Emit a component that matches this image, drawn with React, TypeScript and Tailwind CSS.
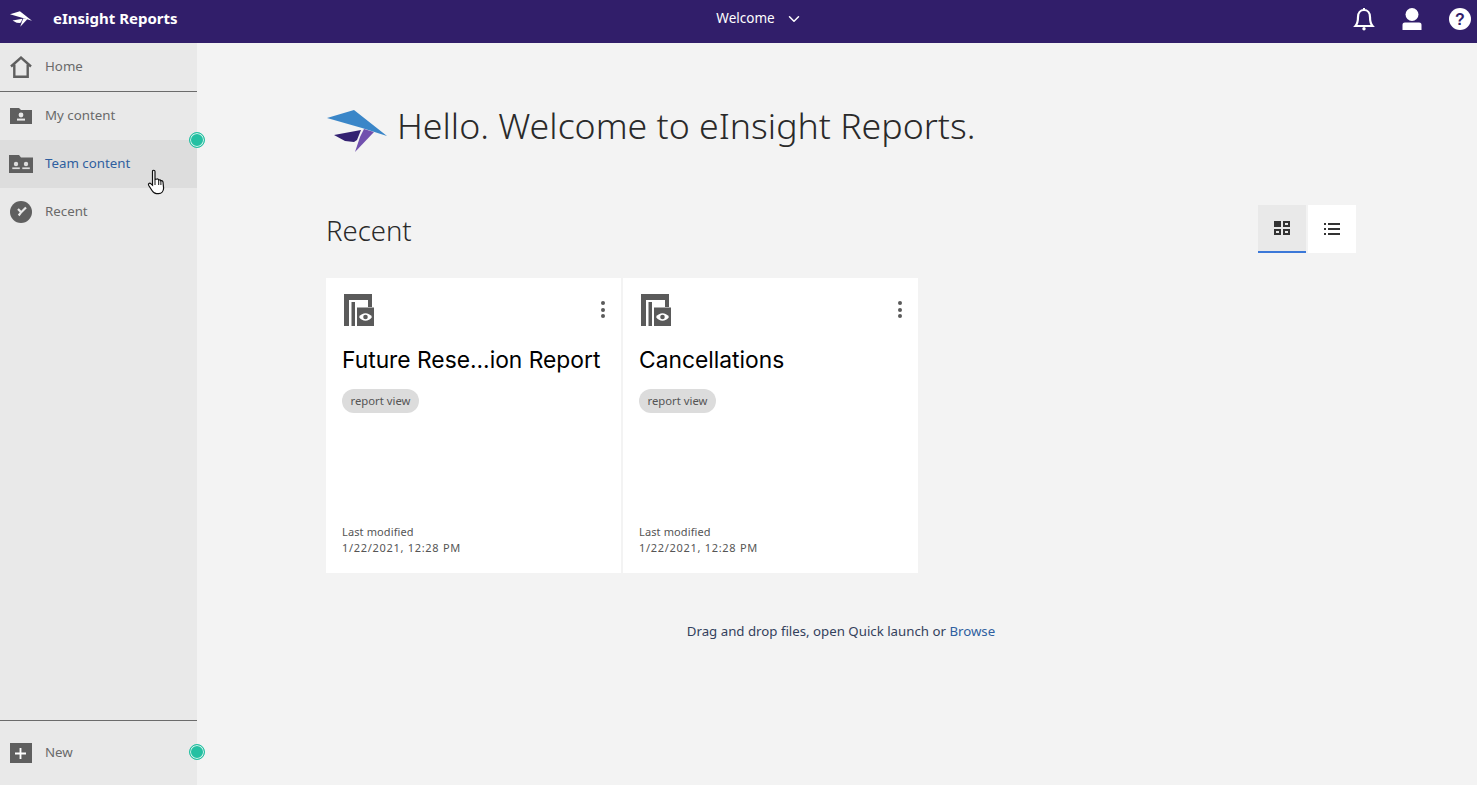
import { ChevronDown } from "lucide-react";

const font = { fontFamily: '"Noto Sans", "Liberation Sans", sans-serif' };

function Bird() {
  return (
    <svg viewBox="0 0 60 42" className="ml-[1px] mt-[10px] h-[42px] w-[60px] shrink-0">
      <path d="M0 8 L27 0 L60 26 L35 18 Z" fill="#3a86c8" />
      <path d="M7 25 L34 20 L30 30 L27 32 L18 31 Z" fill="#332171" />
      <path d="M37 19 L47 22 L28 42 L33 27 Z" fill="#7150ae" />
    </svg>
  );
}

function BirdWhite() {
  return (
    <svg viewBox="0 0 60 42" className="h-[16px] w-[22px]" fill="#fff">
      <path d="M0 8 L27 0 L60 26 L35 18 Z" />
      <path d="M7 25 L34 20 L30 30 L27 32 L18 31 Z" />
      <path d="M37 19 L47 22 L28 42 L33 27 Z" />
    </svg>
  );
}

function HomeIcon() {
  return (
    <svg viewBox="0 0 22 22" className="h-[22px] w-[22px]" fill="none" stroke="#5f5f5f" strokeWidth="2.4">
      <path d="M1 10.5 L11 1.6 L21 10.5" />
      <path d="M4.3 8.5 V20.8 H17.7 V8.5" />
    </svg>
  );
}

function MyContentIcon() {
  return (
    <svg viewBox="0 0 22 16" className="h-4 w-[22px]">
      <path d="M0 0 H9 L11 2 H22 V16 H0 Z" fill="#5f5f5f" />
      <circle cx="11" cy="7" r="2.4" fill="#e8e8e8" />
      <rect x="7" y="10.6" width="8" height="2" fill="#e8e8e8" />
    </svg>
  );
}

function TeamContentIcon() {
  return (
    <svg viewBox="0 0 24 18" className="h-[18px] w-6">
      <path d="M0 0 H10 L12 2.5 H24 V18 H0 Z" fill="#5f5f5f" />
      <circle cx="7" cy="9" r="2.2" fill="#dddddd" />
      <rect x="3.3" y="12.4" width="7.5" height="1.7" fill="#dddddd" />
      <circle cx="17" cy="9" r="2.2" fill="#dddddd" />
      <rect x="13.3" y="12.4" width="7.5" height="1.7" fill="#dddddd" />
    </svg>
  );
}

function RecentIcon() {
  return (
    <svg viewBox="0 0 22 22" className="h-[22px] w-[22px]">
      <circle cx="11" cy="11" r="11" fill="#5f5f5f" />
      <path d="M8 8 L11.2 11.2 L16 6.5 M11.2 11.2 L8.7 14.5" stroke="#e8e8e8" strokeWidth="2.2" fill="none" />
    </svg>
  );
}

function Cursor() {
  return (
    <svg viewBox="0 0 20 26" className="h-[26px] w-5">
      <path
        d="M5.5 2.5 C5.5 0.8 8 0.8 8 2.5 V10.5 L10 10 C11 9.8 11.6 10.4 11.7 11 C12.6 10.5 13.6 10.9 13.8 11.8 C14.8 11.4 15.8 12 16 13 L16.6 19 C16.6 22 14.8 24.6 11.5 24.6 H9.5 C7.3 24.6 6.2 23.4 5 21.5 L1.6 16.2 C1 15 2.4 13.6 3.7 14.6 L5.5 16.2 Z"
        fill="#fff"
        stroke="#111"
        strokeWidth="1.2"
      />
      <path d="M8 11 V16 M11.7 11.2 V16 M13.9 12 V16" stroke="#111" strokeWidth="1" fill="none" />
    </svg>
  );
}

function ReportIcon() {
  return (
    <svg viewBox="0 0 30 32" className="ml-[2px] h-8 w-[30px]">
      <path fillRule="evenodd" fill="#5a5a5a" d="M0 0 H28 V13 H24 V8 H7.5 V32 H0 Z M5 6 V32 H7.5 V8 H24 V6 Z" />
      <rect x="7.5" y="8" width="3.5" height="24" fill="#5a5a5a" />
      <rect x="13" y="13.5" width="17" height="18.5" fill="#5a5a5a" />
      <path d="M15 23 C18.5 18 24.5 18 28 23 C24.5 28 18.5 28 15 23 Z" fill="#fff" />
      <circle cx="21.5" cy="23" r="2.3" fill="#5a5a5a" />
    </svg>
  );
}

function Dot({ top }: { top: number }) {
  return (
    <span
      className="absolute left-[189px] h-4 w-4 rounded-full border-[1.5px] border-[#24c0a2] bg-[#24c0a2] shadow-[inset_0_0_0_1px_#d6f3ec]"
      style={{ top }}
    />
  );
}

function NavItem({ icon, label, active, className = "" }: { icon: React.ReactNode; label: string; active?: boolean; className?: string }) {
  return (
    <div className={`flex h-12 items-center ${active ? "bg-[#dddddd]" : ""} ${className}`}>
      <div className="flex w-[45px] shrink-0 justify-center pr-[4px]">{icon}</div>
      <span className={`text-[13.3px] ${active ? "text-[#2f5f9f]" : "text-[#6a6a6a]"}`}>{label}</span>
    </div>
  );
}

function ReportCard({ title }: { title: string }) {
  return (
    <div className="flex h-[295px] w-[295px] flex-col bg-white px-4 pt-4 pb-[17px]">
      <div className="flex items-start justify-between">
        <ReportIcon />
        <div className="mt-[7px] flex flex-col gap-[2.5px]">
          <span className="h-1 w-1 rounded-full bg-[#5a5a5a]" />
          <span className="h-1 w-1 rounded-full bg-[#5a5a5a]" />
          <span className="h-1 w-1 rounded-full bg-[#5a5a5a]" />
        </div>
      </div>
      <div className="mt-5 whitespace-nowrap text-[22.8px] leading-7 text-black" style={{ fontFamily: "Inter, sans-serif" }}>
        {title}
      </div>
      <span className="mt-[15px] flex h-6 w-[77px] items-center justify-center rounded-full bg-[#dcdcdc] text-[11.3px] text-[#555555]">report view</span>
      <div className="mt-auto text-[11px] leading-4 text-[#555555]">
        <div className="tracking-[0.12px]">Last modified</div>
        <div className="tracking-[0.7px]">1/22/2021, 12:28 PM</div>
      </div>
    </div>
  );
}

export default function App() {
  return (
    <div className="relative flex h-[785px] w-[1477px] flex-col overflow-hidden bg-[#f3f3f3]" style={font}>
      <header className="grid h-[43px] shrink-0 grid-cols-[1fr_auto_1fr] items-center bg-[#311e6a] pb-[6px] text-white">
        <div className="flex items-center pl-[10px]">
          <BirdWhite />
          <span className="ml-[21px] text-[15px] font-bold">eInsight Reports</span>
        </div>
        <div className="ml-[42px] flex items-center gap-[10px] text-[13.5px]">
          Welcome <ChevronDown size={18} />
        </div>
        <div className="flex items-center justify-end gap-[26px] pr-[6px]">
          <svg viewBox="0 0 22 24" className="h-6 w-[22px]" fill="none" stroke="#fff" strokeWidth="2.2">
            <path d="M2.5 19 C5 16 5 13 5 10 C5 6 7.5 3 11 3 C14.5 3 17 6 17 10 C17 13 17 16 19.5 19 Z" />
            <circle cx="11" cy="21.8" r="1.7" fill="#fff" stroke="none" />
            <rect x="10" y="1" width="2" height="2" fill="#fff" stroke="none" />
          </svg>
          <svg viewBox="0 0 22 24" className="h-6 w-[22px]" fill="#fff">
            <circle cx="11" cy="7.5" r="6.5" />
            <path d="M4 15.5 H18 C20 15.5 20.5 16.5 20.5 18 V23 H1.5 V18 C1.5 16.5 2 15.5 4 15.5 Z" />
          </svg>
          <svg viewBox="0 0 22 22" className="h-[22px] w-[22px]">
            <circle cx="11" cy="11" r="11" fill="#fff" />
            <text x="11" y="16.5" textAnchor="middle" fontSize="16" fontWeight="700" fill="#311e6a" fontFamily="Liberation Sans">?</text>
          </svg>
        </div>
      </header>

      <div className="flex min-h-0 flex-1">
        <aside className="flex w-[197px] shrink-0 flex-col bg-[#e9e9e9]">
          <NavItem icon={<HomeIcon />} label="Home" className="box-content border-b border-[#6b6b6b]" />
          <NavItem icon={<MyContentIcon />} label="My content" />
          <NavItem icon={<TeamContentIcon />} label="Team content" active />
          <NavItem icon={<RecentIcon />} label="Recent" />
          <div className="mt-auto flex h-[65px] items-center border-t border-[#6b6b6b]">
            <div className="flex w-[45px] shrink-0 justify-center pr-[4px]">
              <div className="flex h-5 w-[22px] items-center justify-center bg-[#5f5f5f]">
                <svg viewBox="0 0 12 12" className="h-[11px] w-[11px]" stroke="#fff" strokeWidth="2">
                  <path d="M6 0 V12 M0 6 H12" />
                </svg>
              </div>
            </div>
            <span className="text-[13.3px] text-[#6a6a6a]">New</span>
          </div>
        </aside>

        <main className="flex-1 pl-[129px] pr-[121px]">
          <div className="mt-[57px] flex items-center">
            <Bird />
            <h1 className="-mt-[2px] ml-[10px] text-[35.7px] leading-[48px] font-light text-[#2a2a2a]">Hello. Welcome to eInsight Reports.</h1>
          </div>
          <div className="mt-[53px] flex items-center justify-between">
            <h2 className="mt-1 text-[27.5px] font-light text-[#2a2a2a]">Recent</h2>
            <div className="flex gap-[2px]">
              <div className="flex h-12 w-12 items-center justify-center border-b-2 border-[#3b78d8] bg-[#e9e9e9]">
                <svg viewBox="0 0 16 14" className="h-[14px] w-4" fill="#333">
                  <rect width="7" height="6" />
                  <path fillRule="evenodd" d="M9 0 H16 V6 H9 Z M11 2 V4 H14 V2 Z" />
                  <path fillRule="evenodd" d="M0 8 H7 V14 H0 Z M2 10 V12 H5 V10 Z" />
                  <path fillRule="evenodd" d="M9 8 H16 V14 H9 Z M11 10 V12 H14 V10 Z" />
                </svg>
              </div>
              <div className="flex h-12 w-12 items-center justify-center bg-white">
                <svg viewBox="0 0 16 12" className="h-3 w-4" fill="#333">
                  <rect y="0" width="2" height="2" />
                  <rect x="4" y="0" width="12" height="2" />
                  <rect y="5" width="2" height="2" />
                  <rect x="4" y="5" width="12" height="2" />
                  <rect y="10" width="2" height="2" />
                  <rect x="4" y="10" width="12" height="2" />
                </svg>
              </div>
            </div>
          </div>
          <div className="mt-[25px] flex gap-[2px]">
            <ReportCard title="Future Rese...ion Report" />
            <ReportCard title="Cancellations" />
          </div>
          <p className="mt-[49px] text-center text-[13.25px] text-[#33415c]">
            Drag and drop files, open Quick launch or <span className="text-[#2f5f9f]">Browse</span>
          </p>
        </main>
      </div>

      <Dot top={132} />
      <Dot top={744} />
      <div className="absolute left-[147px] top-[169px]">
        <Cursor />
      </div>
    </div>
  );
}
